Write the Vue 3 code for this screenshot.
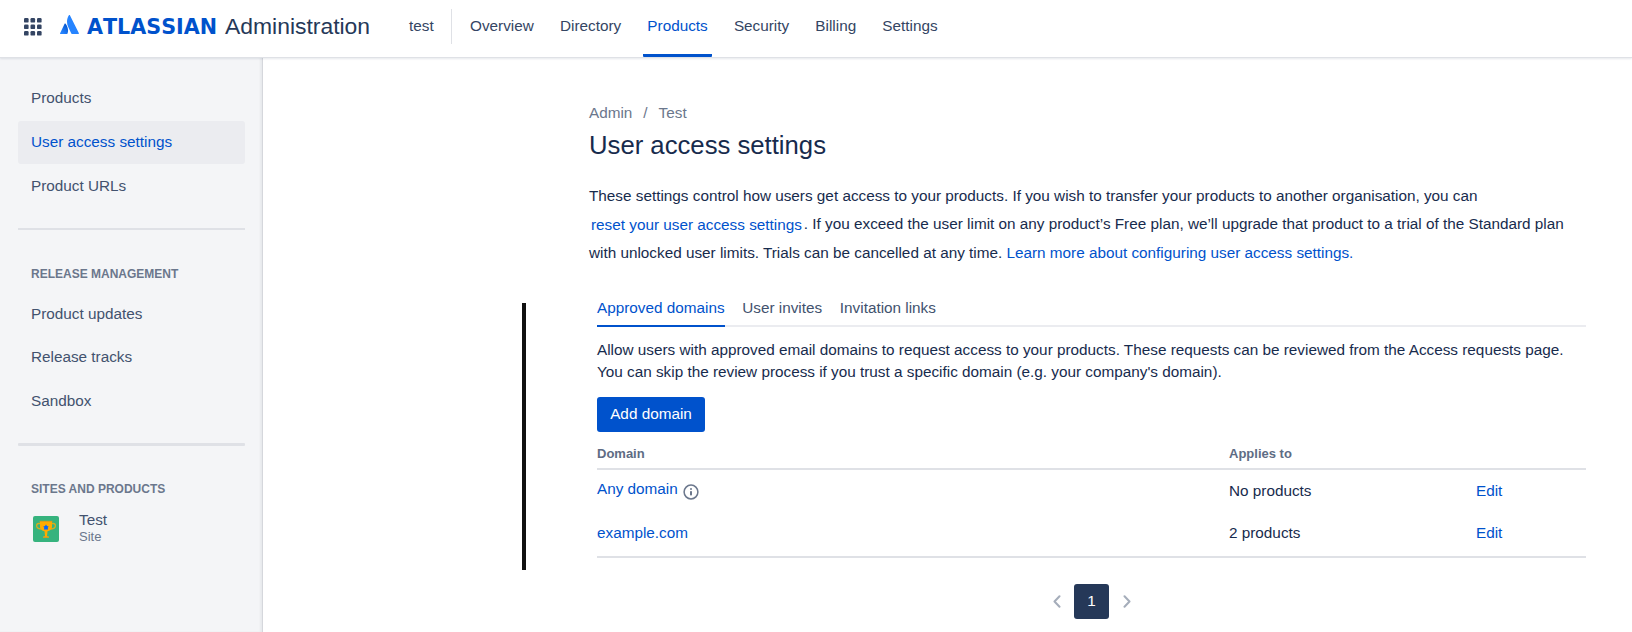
<script setup>
const tabs = ['Overview', 'Directory', 'Products', 'Security', 'Billing', 'Settings']
const primary = ['Products', 'User access settings', 'Product URLs']
const release = ['Product updates', 'Release tracks', 'Sandbox']
const domainTabs = ['Approved domains', 'User invites', 'Invitation links']
const rows = [
  { domain: 'Any domain', info: true, applies: 'No products' },
  { domain: 'example.com', info: false, applies: '2 products' },
]
const dots = [0, 6.5, 13]
</script>

<template>
  <div class="page">
    <header class="header">
      <svg class="switcher" width="18" height="18" viewBox="0 0 18 18">
        <template v-for="y in dots" :key="y">
          <rect v-for="x in dots" :key="x" :x="x" :y="y" width="4.6" height="4.6" rx="1.2" fill="#344563" />
        </template>
      </svg>
      <svg class="mark" width="20" height="20" viewBox="0 0 20 20">
        <defs>
          <linearGradient id="markShade" x1="0.9" y1="0.1" x2="0.3" y2="0.9">
            <stop offset="0" stop-color="#0052cc" />
            <stop offset="1" stop-color="#2684ff" />
          </linearGradient>
        </defs>
        <path d="M5.6 8.7c-.3-.4-.8-.3-1 .1L.1 18.2c-.2.4.1.8.5.8h6.3c.2 0 .4-.1.5-.3 1.4-2.8.5-7.2-1.8-10z" fill="url(#markShade)" />
        <path d="M8.9.3c-2.500 4-2.300 8.400-.7 11.700l3.100 6.600c.1.2.3.4.6.4h6.300c.5 0 .8-.4.6-.9L9.900.3c-.2-.4-.7-.4-1 0z" fill="#2684ff" />
      </svg>
      <span class="brand">ATLASSIAN</span>
      <span class="product">Administration</span>
      <span class="org">test</span>
      <nav class="nav">
        <a v-for="t in tabs" :key="t" :class="{ active: t === 'Products' }">{{ t }}</a>
      </nav>
    </header>

    <div class="body">
      <aside class="side">
        <a v-for="p in primary" :key="p" class="item" :class="{ selected: p === 'User access settings' }">{{ p }}</a>
        <hr class="rule first" />
        <h4 class="release">RELEASE MANAGEMENT</h4>
        <a v-for="p in release" :key="p" class="item tight">{{ p }}</a>
        <hr class="rule second" />
        <h4 class="sites">SITES AND PRODUCTS</h4>
        <div class="site">
          <svg width="26" height="26" viewBox="0 0 26 26">
            <rect width="26" height="26" rx="2" fill="#36b37e" />
            <path d="M7.500 7.500H5.600q-2 0-2 2.300 0 3 4.400 3.200M18.500 7.500h1.900q2 0 2 2.300 0 3-4.400 3.200" fill="none" stroke="#d9ad1c" stroke-width="1.300" />
            <path d="M7 5h12v6c0 2.300-2 3.800-4.500 4.300L14 20.300h1.600v1.400h-5.200v-1.400H12l-.5-5C9 14.800 7 13.300 7 11z" fill="#ffab00" />
            <path d="M6.500 5.300h13M10 21.300h6" stroke="#d39b22" stroke-width="1" />
            <path d="m13 8.500 1 1.600 1.700.3-1 1.400.4 1.800h-4.200l.4-1.800-1-1.400 1.700-.3z" fill="#0065ff" />
          </svg>
          <div class="site-text"><span>Test</span><small>Site</small></div>
        </div>
      </aside>

      <main class="main">
        <div class="marker"></div>
        <section class="content">
          <div class="crumbs"><span>Admin</span><span>/</span><span>Test</span></div>
          <h1>User access settings</h1>
          <p class="intro">
            These settings control how users get access to your products. If you wish to transfer your products to another organisation, you can<br />
            <a class="reset">reset your user access settings</a>. If you exceed the user limit on any product’s Free plan, we’ll upgrade that product to a trial of the Standard plan<br />
            with unlocked user limits. Trials can be cancelled at any time. <a>Learn more about configuring user access settings.</a>
          </p>
          <div class="panel">
            <div class="tabs">
              <span v-for="(t, i) in domainTabs" :key="t" :class="{ on: i === 0 }">{{ t }}</span>
            </div>
            <p class="desc">
              Allow users with approved email domains to request access to your products. These requests can be reviewed from the Access requests page.<br />
              You can skip the review process if you trust a specific domain (e.g. your company's domain).
            </p>
            <button class="add">Add domain</button>
            <div class="row head"><span>Domain</span><span>Applies to</span><span></span></div>
            <div class="rows">
              <div v-for="r in rows" :key="r.domain" class="row">
                <span class="domain" :class="{ raised: r.info }">
                  <a>{{ r.domain }}</a>
                  <svg v-if="r.info" width="16" height="16" viewBox="0 0 16 16">
                    <circle cx="8" cy="8" r="6.9" fill="none" stroke="#6b778c" stroke-width="1.5" />
                    <circle cx="8" cy="4.9" r="1" fill="#6b778c" />
                    <rect x="7" y="7" width="2" height="4.5" rx="0.8" fill="#6b778c" />
                  </svg>
                </span>
                <span>{{ r.applies }}</span>
                <a>Edit</a>
              </div>
            </div>
            <div class="pager">
              <svg width="8" height="13" viewBox="0 0 8 13"><path d="M6.500 1.200 1.500 6.500l5 5.300" /></svg>
              <span>1</span>
              <svg width="8" height="13" viewBox="0 0 8 13"><path d="m1.500 1.200 5 5.300-5 5.300" /></svg>
            </div>
          </div>
        </section>
      </main>
    </div>
  </div>
</template>

<style>
body { background: #fff; overflow: hidden; }
</style>

<style scoped>
* { box-sizing: border-box; }
.page {
  width: 1632px; height: 632px; overflow: hidden;
  display: flex; flex-direction: column;
  font-family: "Liberation Sans", Arial, sans-serif;
  font-size: 15.3px; color: #172b4d; white-space: nowrap;
}
a { color: #0052cc; }
h1, h4, p { margin: 0; }
.header {
  position: relative; z-index: 1; flex: none; height: 57px; display: flex; background: #fff;
  box-shadow: 0 1px 0 #dfe1e6, 0 2px 2px rgba(9, 30, 66, 0.1);
}
.switcher { margin: 18px 0 0 24px; }
.mark { margin: 15px 0 0 18px; }
.brand {
  margin-left: 7px; width: 131px; line-height: 54px;
  font-family: "DejaVu Sans", sans-serif; font-weight: 700; font-size: 20.7px; font-kerning: none; color: #0052cc;
}
.product { margin-left: 7px; width: 184px; font-size: 22.9px; line-height: 52px; color: #253858; }
.org {
  width: 43px; height: 35px; margin: 9px 14px 0 0; line-height: 34px; color: #344563;
  border-right: 1px solid #dfe1e6;
}
.nav { display: flex; gap: 18.2px; }
.nav a { padding: 0 4px; line-height: 52px; color: #344563; height: 57px; }
.nav a.active { color: #0052cc; border-bottom: 3px solid #0052cc; border-radius: 1px; }
.body { flex: 1; display: flex; }
.side {
  width: 263px; padding: 20px 18px 0; background: #f4f5f7;
  border-right: 1px solid #d5d7dc; box-shadow: inset -2px 0 2px rgba(9, 30, 66, 0.05);
}
.item {
  display: block; width: 227px; height: 43px; line-height: 42px; margin-bottom: 1px; padding-left: 13px;
  border-radius: 3px; color: #42526e;
}
.item.tight { margin-bottom: 0.5px; }
.item.selected { background: #ebecf0; color: #0052cc; }
.rule { width: 227px; border: 0; background: #dfe1e6; }
.rule.first { height: 2px; margin: 20px 0 0; }
.rule.second { height: 3px; margin: 20.9px 0 0; border-radius: 1px; }
h4 { padding-left: 13px; font-size: 12px; line-height: 14px; color: #6b778c; }
.release { margin: 37px 0 11.6px; }
.sites { margin-top: 36px; }
.site { display: flex; margin-top: 14px; padding-left: 15px; }
.site svg { margin-top: 6px; }
.site-text { margin-left: 20px; display: flex; flex-direction: column; color: #42526e; line-height: 19px; }
.site-text small { font-size: 13px; line-height: 15px; color: #6b778c; }
.main { flex: 1; display: flex; }
.marker { width: 4px; height: 267px; margin: 246px 63px 0 259px; background: #111; }
.content { width: 1000px; padding-top: 46px; }
.crumbs { display: flex; gap: 11px; line-height: 20px; color: #6b778c; }
h1 { font-size: 25.7px; font-weight: 400; line-height: 30px; margin-top: 7px; }
.intro { height: 85px; line-height: 28.5px; margin-top: 21.7px; }
.reset { display: inline-block; position: relative; top: 1px; padding: 0 2px; line-height: 20px; }
.panel { width: 989px; margin-left: 8px; }
.tabs { display: flex; gap: 17.7px; height: 34px; margin-top: 26.3px; line-height: 29px; border-bottom: 2px solid #ebecf0; color: #42526e; }
.tabs span { height: 34px; }
.tabs .on { color: #0052cc; border-bottom: 2px solid #0052cc; }
.desc { line-height: 22px; margin-top: 12px; }
.add {
  display: block; width: 108px; height: 35px; margin-top: 14px; padding: 0 0 1px; border: 0; border-radius: 3px;
  background: #0052cc; color: #fff; font: inherit;
}
.row { display: grid; grid-template-columns: 632px 247px 1fr; height: 42px; line-height: 42px; }
.row.head { height: 38px; line-height: 44px; font-size: 13px; font-weight: 700; color: #5e6c84; border-bottom: 2px solid #dfe1e6; }
.rows { height: 88px; border-bottom: 2px solid #dfe1e6; }
.domain { display: flex; gap: 5px; }
.raised { line-height: 38px; }
.domain svg { margin-top: 14px; }
.pager { display: flex; align-items: center; justify-content: center; height: 35px; margin-top: 26px; padding-left: 1px; }
.pager span { width: 35px; height: 35px; margin: 0 14px 0 13px; border-radius: 3px; background: #253858; color: #fff; line-height: 34px; text-align: center; }
.pager path { fill: none; stroke: #a5adba; stroke-width: 2; stroke-linecap: round; stroke-linejoin: round; }
</style>
